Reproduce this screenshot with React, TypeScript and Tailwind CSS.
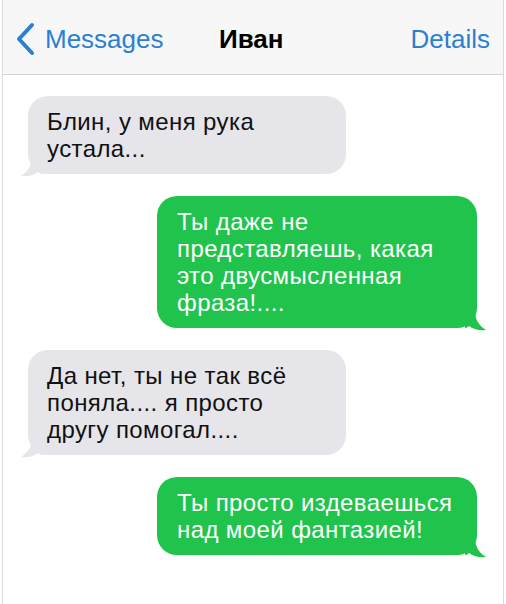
import React from "react";

type Side = "in" | "out";

interface Message {
    side: Side;
    lines: string[];
}

const messages: Message[] = [
    { side: "in", lines: ["Блин, у меня рука", "устала..."] },
    {
        side: "out",
        lines: ["Ты даже не", "представляешь, какая", "это двусмысленная", "фраза!...."],
    },
    { side: "in", lines: ["Да нет, ты не так всё", "поняла.... я просто", "другу помогал...."] },
    { side: "out", lines: ["Ты просто издеваешься", "над моей фантазией!"] },
];

// хвостик пузыря (нарисован для правой стороны, слева отражается)
const Tail: React.FC<{ side: Side; color: string }> = ({ side, color }) => (
    <svg
        className={
            side === "out"
                ? "absolute -right-[10px] bottom-[-3px] w-[22px] h-[20px]"
                : "absolute -left-[8px] bottom-[-3px] w-[22px] h-[20px] -scale-x-100"
        }
        viewBox="0 0 22 20"
    >
        <path d="M0 0 H10 C10 8 14 15 21 19 C14 20 8 18 4 15 C2 17 0 17 0 17 Z" fill={color} />
    </svg>
);

const Bubble: React.FC<{ message: Message }> = ({ message }) => {
    const out = message.side === "out";
    const color = out ? "#20c44d" : "#e5e5ea";
    return (
        <div className={out ? "flex justify-end pr-[26px]" : "flex justify-start pl-[25px]"}>
            <div
                className={
                    out
                        ? "relative w-[320px] rounded-[20px] bg-[#20c44d] px-[20px] py-[12px] text-white"
                        : "relative w-[318px] rounded-[20px] bg-[#e5e5ea] px-[19px] py-[12px] text-[#111]"
                }
            >
                <Tail side={message.side} color={color} />
                <div className="relative text-[24px] leading-[27px] tracking-[0.4px]">
                    {message.lines.map((line) => (
                        <div key={line} className="whitespace-nowrap">
                            {line}
                        </div>
                    ))}
                </div>
            </div>
        </div>
    );
};

export default function App() {
    return (
        <div className="pl-[2px] bg-white" style={{ fontFamily: '"Liberation Sans", Arial, sans-serif' }}>
            <div className="w-[502px] h-[604px] border-x border-[#dadada] bg-white">
                {/* шапка диалога */}
                <header className="h-[75px] border-b border-[#d4d4d4] bg-[#f7f7f7] flex items-center pt-[4px] pl-[11px] pr-[13px]">
                    <div className="flex items-center text-[#2b7fd1] w-[190px]">
                        <svg className="w-[22px] h-[34px]" viewBox="0 0 22 34" fill="none">
                            <path
                                d="M18 3 L5 17 L18 31"
                                stroke="#2b7fd1"
                                strokeWidth="4"
                                strokeLinecap="round"
                                strokeLinejoin="round"
                            />
                        </svg>
                        <span className="ml-[9px] text-[26px]">Messages</span>
                    </div>
                    <div className="flex-1 text-[26px] font-bold text-black pl-[15px]">Иван</div>
                    <div className="text-[26px] text-[#2b7fd1]">Details</div>
                </header>

                <main className="flex flex-col gap-[22px] pt-[21px]">
                    {messages.map((m, i) => (
                        <Bubble key={i} message={m} />
                    ))}
                </main>
            </div>
        </div>
    );
}
